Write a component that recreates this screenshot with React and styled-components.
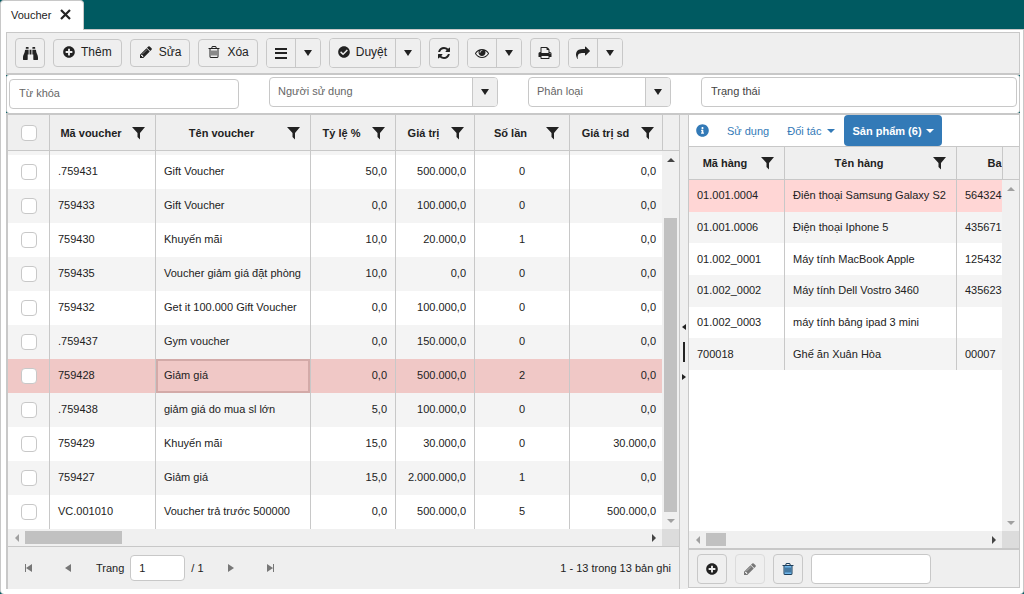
import React from 'react';
import styled, { createGlobalStyle, css } from 'styled-components';
import { FaBinoculars, FaPlusCircle, FaCheckCircle, FaInfoCircle } from 'react-icons/fa';

const line = '#c8c8c8';
const panel = '#efefef';
const ink = '#222';
const blue = '#337ab7';
const teal = '#005a61';

const GlobalStyle = createGlobalStyle`
  *, *::before, *::after { box-sizing: border-box; }
  body { margin: 0; background: ${teal}; color: ${ink}; font: 11px/16px "Liberation Sans", Arial, sans-serif; }
  button, input, select { font: inherit; color: inherit; margin: 0; }
  button { cursor: pointer; }
  svg { display: block; flex: none; }
`;

/* ---------- icons ---------- */
const glyphs = {
  trash: 'M704 736v576q0 14-9 23t-23 9h-64q-14 0-23-9t-9-23v-576q0-14 9-23t23-9h64q14 0 23 9t9 23zm256 0v576q0 14-9 23t-23 9h-64q-14 0-23-9t-9-23v-576q0-14 9-23t23-9h64q14 0 23 9t9 23zm256 0v576q0 14-9 23t-23 9h-64q-14 0-23-9t-9-23v-576q0-14 9-23t23-9h64q14 0 23 9t9 23zm128 724v-948h-896v948q0 22 7 40.5t14.5 27 10.5 8.5h832q3 0 10.5-8.5t14.5-27 7-40.5zm-672-1076h448l-48-117q-7-9-17-11h-317q-10 2-17 11zm928 32v64q0 14-9 23t-23 9h-96v948q0 83-47 143.5t-113 60.5h-832q-66 0-113-58.5t-47-141.5v-952h-96q-14 0-23-9t-9-23v-64q0-14 9-23t23-9h309l70-167q15-37 54-63t79-26h320q40 0 79 26t54 63l70 167h309q14 0 23 9t9 23z',
  eye: 'M1664 960q-152-236-381-353 61 104 61 225 0 185-131.5 316.5t-316.5 131.5-316.5-131.5-131.5-316.5q0-121 61-225-229 117-381 353 133 205 333.5 326.5t434.5 121.5 434.5-121.5 333.5-326.5zm-720-384q0-20-14-34t-34-14q-125 0-214.5 89.5t-89.5 214.5q0 20 14 34t34 14 34-14 14-34q0-86 61-147t147-61q20 0 34-14t14-34zm848 384q0 34-20 69-140 230-376.5 368.5t-499.5 138.5-499.5-139-376.5-368q-20-35-20-69t20-69q140-229 376.5-368t499.5-139 499.5 139 376.5 368q20 35 20 69z',
  print: 'M448 1536h896v-256h-896v256zm0-640h896v-384h-160q-40 0-68-28t-28-68v-160h-640v640zm1152 64q0-26-19-45t-45-19-45 19-19 45 19 45 45 19 45-19 19-45zm128 0v416q0 13-9.5 22.5t-22.5 9.5h-224v160q0 40-28 68t-68 28h-960q-40 0-68-28t-28-68v-160h-224q-13 0-22.5-9.5t-9.5-22.5v-416q0-79 56.5-135.5t135.5-56.5h64v-544q0-40 28-68t68-28h672q40 0 88 20t76 48l152 152q28 28 48 76t20 88v256h64q79 0 135.5 56.5t56.5 135.5z',
  refresh: 'M1639 1056q0 5-1 7-64 268-268 434.5t-478 166.5q-146 0-282.5-55t-243.5-157l-129 129q-19 19-45 19t-45-19-19-45v-448q0-26 19-45t45-19h448q26 0 45 19t19 45-19 45l-137 137q71 66 161 102t187 36q134 0 250-65t186-179q11-17 53-117 8-23 30-23h192q13 0 22.5 9.5t9.5 22.5zm25-800v448q0 26-19 45t-45 19h-448q-26 0-45-19t-19-45 19-45l138-138q-148-137-349-137-134 0-250 65t-186 179q-11 17-53 117-8 23-30 23h-199q-13 0-22.5-9.5t-9.5-22.5v-7q65-268 270-434.5t480-166.5q146 0 284 55.5t245 156.5l130-129q19-19 45-19t45 19 19 45z',
  pencil: 'M491 1536l91-91-235-235-91 91v107h128v128h107zm523-928q0-22-22-22-10 0-17 7l-542 542q-7 7-7 17 0 22 22 22 10 0 17-7l542-542q7-7 7-17zm-54-192l416 416-832 832h-416v-416zm683 96q0 53-37 90l-166 166-416-416 166-165q36-38 90-38 53 0 91 38l235 234q37 39 37 91z',
  share: 'M1792 640q0 26-19 45l-512 512q-19 19-45 19t-45-19-19-45v-256h-224q-98 0-175.5 6t-154 21.5-133 42.5-105.5 69.5-80 101-48.5 138.5-17.5 181q0 55 5 123 0 6 2.5 23.5t2.5 26.5q0 15-8.5 25t-23.5 10q-16 0-28-17-7-9-13-22t-13.5-30-10.5-24q-127-285-127-451 0-199 53-333 162-403 875-403h224v-256q0-26 19-45t45-19 45 19l512 512q19 19 19 45z',
};
const Glyph = ({ name, size = 14, tint }) => (
  <svg width={size} height={size} viewBox="0 0 1792 1792" fill="currentColor" aria-hidden="true">
    {tint && <rect x="400" y="480" width="990" height="1080" fill={tint} />}
    <path d={glyphs[name]} />
  </svg>
);
const MenuIcon = () => (
  <svg width="12" height="12" viewBox="0 0 12 12" fill="currentColor" aria-hidden="true"><path d="M0 1h12v2H0zM0 5h12v2H0zM0 10h12v2H0z" /></svg>
);
const FunnelIcon = () => (
  <svg width="13" height="14" viewBox="0 0 13 14" fill="currentColor" aria-hidden="true"><path d="M0 1h13L8 7v6.5L5.5 11V7z" /></svg>
);
const CloseIcon = () => (
  <svg width="11" height="11" viewBox="0 0 11 11" stroke="currentColor" strokeWidth="2.2" aria-hidden="true"><path d="M1 1l9 9M10 1l-9 9" /></svg>
);
const Arrow = ({ dir = 'down', w = 8, h = 6 }) => {
  const side = dir === 'left' || dir === 'right';
  const pts = { down: `0,0 ${w},0 ${w / 2},${h}`, up: `0,${h} ${w},${h} ${w / 2},0`, left: `${h},0 ${h},${w} 0,${w / 2}`, right: `0,0 0,${w} ${h},${w / 2}` };
  return (
    <svg width={side ? h : w} height={side ? w : h} fill="currentColor" aria-hidden="true"><polygon points={pts[dir]} /></svg>
  );
};
const EdgeIcon = ({ last }) => (
  <svg width="8" height="8" viewBox="0 0 8 8" fill="currentColor" aria-hidden="true">
    <path d={last ? 'M0 0v8l6-4zM6 0h1v8H6z' : 'M8 0v8L2 4zM1 0h1v8H1z'} />
  </svg>
);

/* ---------- frame ---------- */
const Page = styled.div`display: flex; flex-direction: column; min-height: 100vh;`;
const TabStrip = styled.header`display: flex; height: 30px; border-bottom: 1px solid ${line}; background: ${teal};`;
const WindowTab = styled.div`
  display: flex; align-items: center; gap: 9px; height: 30px; padding: 0 12px 2px 10px;
  background: #fff; border: 1px solid ${line}; border-bottom: 0; border-radius: 4px 4px 0 0;
`;
const PlainButton = styled.button`
  display: flex; align-items: center; justify-content: center; padding: 0; border: 0; background: none;
`;
const Frame = styled.main`
  flex: 1; display: flex; flex-direction: column; padding: 2px 3px 5px 5px;
  background: #fff; border: 1px solid ${line}; border-width: 0 1px; border-radius: 0 0 4px 4px;
`;
const Toolbar = styled.div`
  display: flex; align-items: center; gap: 8px; min-height: 43px; padding: 0 8px;
  background: ${panel}; border: 1px solid ${line}; border-bottom-width: 2px;
`;
const buttonBox = css`
  display: flex; align-items: center; justify-content: center;
  background: ${panel}; border: 1px solid ${line}; border-radius: 4px;
`;
const TextButton = styled.button`
  ${buttonBox}
  height: 28px; padding: 0 ${p => (p.$tight ? 8 : 9)}px 2px; gap: 6px; font-size: 12px;
`;
const IconButton = styled.button`
  ${buttonBox}
  width: 30px; height: 30px; padding: 0; color: ${p => p.$color || ink};
  ${p => p.disabled && css`border-color: #dcdcdc; color: #777; cursor: default;`}
`;
const SplitButton = styled.div`
  display: flex; height: 30px; border: 1px solid ${line}; border-radius: 4px; overflow: hidden;
  button { gap: 6px; padding: 0 ${p => (p.$wide ? '8px 2px' : 0)}; font-size: 12px; background: ${panel}; min-width: 28px; }
  button + button { width: 25px; min-width: 25px; padding: 0; border-left: 1px solid ${line}; }
`;

/* ---------- filters ---------- */
const FilterShell = styled.div`background: ${teal}; border-bottom: 2px solid ${line};`;
const Filters = styled.form`
  display: grid; grid-template-columns: 230fr 229fr 143fr 316fr; column-gap: 30px; align-items: start;
  height: 38px; padding: 2px 2px 0; background: #fff; border: 1px solid ${line}; border-width: 0 1px; border-radius: 3px;
`;
const TextField = styled.input`
  width: 100%; height: 30px; padding: 0 9px 2px; background: #fff; border: 1px solid ${line}; border-radius: 4px; outline: 0;
  &::placeholder { color: ${p => (p.$dark ? '#444' : '#666')}; opacity: 1; }
`;
const KeywordField = styled(TextField)`margin-top: 2px;`;
const SelectBox = styled.div`
  display: grid; grid-template-columns: 1fr 25px; height: 30px; background: #fff;
  border: 1px solid ${line}; border-radius: 4px; overflow: hidden;
  select {
    grid-area: 1 / 1 / 2 / 3; appearance: none; width: 100%; border: 0; background: none;
    padding: 0 32px 2px 8px; color: #666; outline: 0;
  }
  span {
    grid-area: 1 / 2; display: flex; align-items: center; justify-content: center; pointer-events: none;
    background: ${panel}; border-left: 1px solid ${line};
  }
`;

/* ---------- grids ---------- */
const Workspace = styled.div`
  flex: 1; display: grid; grid-template-columns: minmax(0, 1fr) 8px minmax(0, 332px);
`;
const LeftPane = styled.section`
  display: flex; flex-direction: column; min-width: 0; background: ${panel};
  border: 1px solid ${line}; border-width: 0 1px 0 2px;
`;
const RightPane = styled.section`
  display: flex; flex-direction: column; min-width: 0; margin-bottom: 1px; background: #fff;
  border: 1px solid ${line}; border-width: 0 1px 1px 1px;
`;
const GridArea = styled.div`
  flex: 1; display: grid; grid-template-columns: minmax(0, 1fr) 17px; grid-template-rows: auto 1fr 17px;
  border-bottom: ${p => p.$base || 1}px solid ${line};
`;
const HeadClip = styled.div`overflow: hidden; border-top: ${p => (p.$top ? 1 : 0)}px solid ${line};`;
const HeadCorner = styled.div`
  background: ${panel}; border: 1px solid ${line}; border-width: ${p => (p.$top ? 1 : 0)}px 0 1px 1px;
`;
const BodyClip = styled.div`overflow: hidden; background: #fff;`;
const Corner = styled.div`background: #dcdcdc;`;

const Table = styled.table`
  width: ${p => p.$width || '100%'}; table-layout: fixed; border-collapse: separate; border-spacing: 0;
  height: ${p => p.$height || 'auto'};
`;
const HeadContent = styled.div`
  display: flex; align-items: center; padding-right: 10px;
  span { flex: 1; text-align: center; white-space: nowrap; }
`;
const HeadCell = styled.th`
  height: ${p => p.$height}px; padding: 0; background: ${panel}; font-weight: bold;
  border: 1px solid ${line}; border-width: 0 1px 1px 0;
  &:last-child { border-right: 0; }
  &:last-child ${HeadContent} { padding-right: 8px; }
`;
const Row = styled.tr`background: ${p => p.$fill};`;
const Cell = styled.td`
  padding: 0 8px ${p => (p.$lift ? 3 : 1)}px; text-align: ${p => p.$align || 'left'}; white-space: nowrap; overflow: hidden;
  border-right: 1px solid ${line};
  &:last-child { border-right: 0; padding-right: 6px; }
  ${p => p.$height && css`height: ${p.$height}px;`}
  ${p => p.$focused && css`box-shadow: inset 0 0 0 2px #d3aaa8;`}
`;
const CheckCell = styled(Cell)`padding: 0; text-align: center; background: none;`;
const Tick = styled.input`
  appearance: none; display: block; width: 16px; height: 16px; margin: 0 auto;
  background: #fff; border: 1px solid ${line}; border-radius: 4px;
`;

/* ---------- scroll bars ---------- */
const Track = styled.div`
  display: flex; flex-direction: ${p => (p.$vertical ? 'column' : 'row')}; background: #f0f0f0;
`;
const TrackArrow = styled(PlainButton)`flex: 0 0 17px; align-self: stretch; color: ${p => (p.$off ? '#a0a0a0' : '#444')};`;
const Before = styled.div`flex: 0 0 ${p => p.$size}px;`;
const Thumb = styled.div`
  background: #c1c1c1; flex: ${p => (p.$size ? `0 0 ${p.$size}px` : '1')};
  margin: ${p => (p.$vertical ? '0 2px' : '2px 0')};
`;
const Rest = styled.div`flex: 1;`;

/* ---------- pager, splitter, detail tabs ---------- */
const Pager = styled.nav`display: flex; align-items: center; height: 42px; padding: 0 8px 0 0;`;
const PageButton = styled(PlainButton)`width: 40px; height: 30px; color: #777;`;
const PageLabel = styled.label`
  display: flex; align-items: center; gap: 6px; margin: 0 7px 0 8px;
  input { width: 55px; height: 26px; padding: 0 8px; background: #fff; border: 1px solid ${line}; border-radius: 4px; }
`;
const PageInfo = styled.span`margin-left: auto;`;
const Splitter = styled.div`
  display: flex; flex-direction: column; align-items: center; justify-content: center; gap: 12px; background: ${panel};
  i { width: 2px; height: 20px; background: ${ink}; }
`;
const DetailTabs = styled.nav`
  display: flex; align-items: center; height: 31px; padding-left: 7px; color: ${blue};
  > svg { margin-right: 9px; }
`;
const DetailTab = styled.button`
  display: flex; align-items: center; gap: ${p => (p.$active ? 4 : 6)}px; height: 31px; padding: 0 ${p => (p.$active ? 8 : 9)}px;
  border: 0; border-radius: 4px; background: ${p => (p.$active ? blue : 'none')};
  color: ${p => (p.$active ? '#fff' : blue)}; font-weight: ${p => (p.$active ? 'bold' : 'normal')};
`;
const DetailTools = styled.div`
  display: flex; align-items: center; gap: 8px; height: 37px; padding: 0 8px; background: ${panel};
`;
const QuickField = styled(TextField)`width: 120px;`;

const columns = [
  { title: 'Mã voucher', width: 106 },
  { title: 'Tên voucher' },
  { title: 'Tỷ lệ %', width: 85, align: 'right' },
  { title: 'Giá trị', width: 79, align: 'right' },
  { title: 'Số lần', width: 95, align: 'center' },
  { title: 'Giá trị sd', width: 92, align: 'right' },
];
const vouchers = [
  ['.759431', 'Gift Voucher', '50,0', '500.000,0', '0', '0,0'],
  ['759433', 'Gift Voucher', '0,0', '100.000,0', '0', '0,0'],
  ['759430', 'Khuyến mãi', '10,0', '20.000,0', '1', '0,0'],
  ['759435', 'Voucher giảm giá đặt phòng', '10,0', '0,0', '0', '0,0'],
  ['759432', 'Get it 100.000 Gift Voucher', '0,0', '100.000,0', '0', '0,0'],
  ['.759437', 'Gym voucher', '0,0', '150.000,0', '0', '0,0'],
  ['759428', 'Giảm giá', '0,0', '500.000,0', '2', '0,0'],
  ['.759438', 'giảm giá do mua sl lớn', '5,0', '100.000,0', '0', '0,0'],
  ['759429', 'Khuyến mãi', '15,0', '30.000,0', '0', '30.000,0'],
  ['759427', 'Giảm giá', '15,0', '2.000.000,0', '1', '0,0'],
  ['VC.001010', 'Voucher trả trước 500000', '0,0', '500.000,0', '5', '500.000,0'],
];
const selectedVoucher = '759428';
const products = [
  ['01.001.0004', 'Điên thoại Samsung Galaxy S2', '564324'],
  ['01.001.0006', 'Điện thoại Iphone 5', '435671'],
  ['01.002_0001', 'Máy tính MacBook Apple', '125432'],
  ['01.002_0002', 'Máy tính Dell Vostro 3460', '435623'],
  ['01.002_0003', 'máy tính bảng ipad 3 mini', ''],
  ['700018', 'Ghế ăn Xuân Hòa', '00007'],
];

const VoucherCols = () => (
  <colgroup>
    <col width="42" />
    {columns.map(c => <col key={c.title} width={c.width} />)}
  </colgroup>
);
const ProductCols = () => (
  <colgroup><col width="96" /><col width="172" /><col width="96" /></colgroup>
);
const Heading = ({ title, height }) => (
  <HeadCell $height={height} scope="col">
    <HeadContent><span>{title}</span><FunnelIcon /></HeadContent>
  </HeadCell>
);
const DropSelect = ({ label }) => (
  <SelectBox>
    <select aria-label={label}><option>{label}</option></select>
    <span><Arrow /></span>
  </SelectBox>
);
const Split = ({ label, wide, children }) => (
  <SplitButton $wide={wide}>
    <PlainButton aria-label={label}>{children}</PlainButton>
    <PlainButton aria-label={`${label} menu`}><Arrow /></PlainButton>
  </SplitButton>
);

function VoucherPane() {
  return (
    <LeftPane>
      <GridArea>
        <HeadClip>
          <Table>
            <VoucherCols />
            <thead>
              <tr>
                <HeadCell $height={36}><Tick type="checkbox" aria-label="All vouchers" /></HeadCell>
                {columns.map(c => <Heading key={c.title} title={c.title} height={36} />)}
              </tr>
            </thead>
          </Table>
        </HeadClip>
        <HeadCorner />
        <BodyClip>
          <Table>
            <VoucherCols />
            <tbody>
              <Row $fill="#f4f4f4">
                <CheckCell $height={4} />
                {columns.map(c => <Cell key={c.title} />)}
              </Row>
              {vouchers.map((v, i) => {
                const selected = v[0] === selectedVoucher;
                return (
                  <Row key={v[0]} $fill={selected ? '#f0c8c6' : i % 2 ? '#f4f4f4' : '#fff'}>
                    <CheckCell $height={34}><Tick type="checkbox" aria-label={v[0]} /></CheckCell>
                    {v.map((text, n) => (
                      <Cell key={columns[n].title} $lift $align={columns[n].align} $focused={selected && n === 1}>{text}</Cell>
                    ))}
                  </Row>
                );
              })}
            </tbody>
          </Table>
        </BodyClip>
        <Track $vertical>
          <TrackArrow aria-label="Scroll up"><Arrow dir="up" w={8} h={4} /></TrackArrow>
          <Before $size={50} />
          <Thumb $vertical />
          <TrackArrow $off aria-label="Scroll down"><Arrow w={8} h={4} /></TrackArrow>
        </Track>
        <Track>
          <TrackArrow $off aria-label="Scroll left"><Arrow dir="left" w={8} h={4} /></TrackArrow>
          <Thumb $size={97} />
          <Rest />
          <TrackArrow aria-label="Scroll right"><Arrow dir="right" w={8} h={4} /></TrackArrow>
        </Track>
        <Corner />
      </GridArea>
      <Pager>
        <PageButton aria-label="First page"><EdgeIcon /></PageButton>
        <PageButton aria-label="Previous page"><Arrow dir="left" w={8} h={6} /></PageButton>
        <PageLabel>Trang <input defaultValue="1" /> / 1</PageLabel>
        <PageButton aria-label="Next page"><Arrow dir="right" w={8} h={6} /></PageButton>
        <PageButton aria-label="Last page"><EdgeIcon last /></PageButton>
        <PageInfo>1 - 13 trong 13 bản ghi</PageInfo>
      </Pager>
    </LeftPane>
  );
}

function ProductPane() {
  return (
    <RightPane>
      <DetailTabs>
        <FaInfoCircle size={13} />
        <DetailTab>Sử dụng</DetailTab>
        <DetailTab>Đối tác <Arrow w={8} h={4} /></DetailTab>
        <DetailTab $active>Sản phẩm (6) <Arrow w={8} h={4} /></DetailTab>
      </DetailTabs>
      <GridArea $base={2}>
        <HeadClip $top>
          <Table $width="364px">
            <ProductCols />
            <thead>
              <tr>
                <Heading title="Mã hàng" height={33} />
                <Heading title="Tên hàng" height={33} />
                <Heading title="Ba" height={33} />
              </tr>
            </thead>
          </Table>
        </HeadClip>
        <HeadCorner $top />
        <BodyClip>
          <Table $width="364px" $height="190px">
            <ProductCols />
            <tbody>
              {products.map((p, i) => (
                <Row key={p[0]} $fill={i === 0 ? '#ffd6d5' : i % 2 ? '#f4f4f4' : '#fff'}>
                  {p.map((text, n) => <Cell key={n}>{text}</Cell>)}
                </Row>
              ))}
            </tbody>
          </Table>
        </BodyClip>
        <Track $vertical>
          <TrackArrow $off aria-label="Scroll up"><Arrow dir="up" w={8} h={4} /></TrackArrow>
          <Rest />
          <TrackArrow $off aria-label="Scroll down"><Arrow w={8} h={4} /></TrackArrow>
        </Track>
        <Track>
          <TrackArrow $off aria-label="Scroll left"><Arrow dir="left" w={8} h={4} /></TrackArrow>
          <Thumb $size={20} />
          <Rest />
          <TrackArrow aria-label="Scroll right"><Arrow dir="right" w={8} h={4} /></TrackArrow>
        </Track>
        <Corner />
      </GridArea>
      <DetailTools>
        <IconButton aria-label="Add"><FaPlusCircle size={12} /></IconButton>
        <IconButton aria-label="Edit" disabled><Glyph name="pencil" /></IconButton>
        <IconButton aria-label="Delete" $color="#1d3f5c"><Glyph name="trash" tint="#6fb6ea" /></IconButton>
        <QuickField aria-label="Quick entry" />
      </DetailTools>
    </RightPane>
  );
}

export default function App() {
  return (
    <Page>
      <GlobalStyle />
      <TabStrip>
        <WindowTab>Voucher <PlainButton aria-label="Close"><CloseIcon /></PlainButton></WindowTab>
      </TabStrip>
      <Frame>
        <Toolbar>
          <IconButton aria-label="Find"><FaBinoculars size={15} /></IconButton>
          <TextButton><FaPlusCircle size={12} /> Thêm</TextButton>
          <TextButton $tight><Glyph name="pencil" /> Sửa</TextButton>
          <TextButton $tight><Glyph name="trash" /> Xóa</TextButton>
          <Split label="List"><MenuIcon /></Split>
          <Split label="Duyệt" wide><FaCheckCircle size={12} /> Duyệt</Split>
          <IconButton aria-label="Refresh"><Glyph name="refresh" /></IconButton>
          <Split label="View"><Glyph name="eye" /></Split>
          <IconButton aria-label="Print"><Glyph name="print" /></IconButton>
          <Split label="Share"><Glyph name="share" /></Split>
        </Toolbar>
        <FilterShell>
          <Filters>
            <KeywordField aria-label="Từ khóa" placeholder="Từ khóa" />
            <DropSelect label="Người sử dụng" />
            <DropSelect label="Phân loại" />
            <TextField $dark aria-label="Trạng thái" placeholder="Trạng thái" />
          </Filters>
        </FilterShell>
        <Workspace>
          <VoucherPane />
          <Splitter>
            <Arrow dir="left" w={6} h={4} />
            <i />
            <Arrow dir="right" w={6} h={4} />
          </Splitter>
          <ProductPane />
        </Workspace>
      </Frame>
    </Page>
  );
}
